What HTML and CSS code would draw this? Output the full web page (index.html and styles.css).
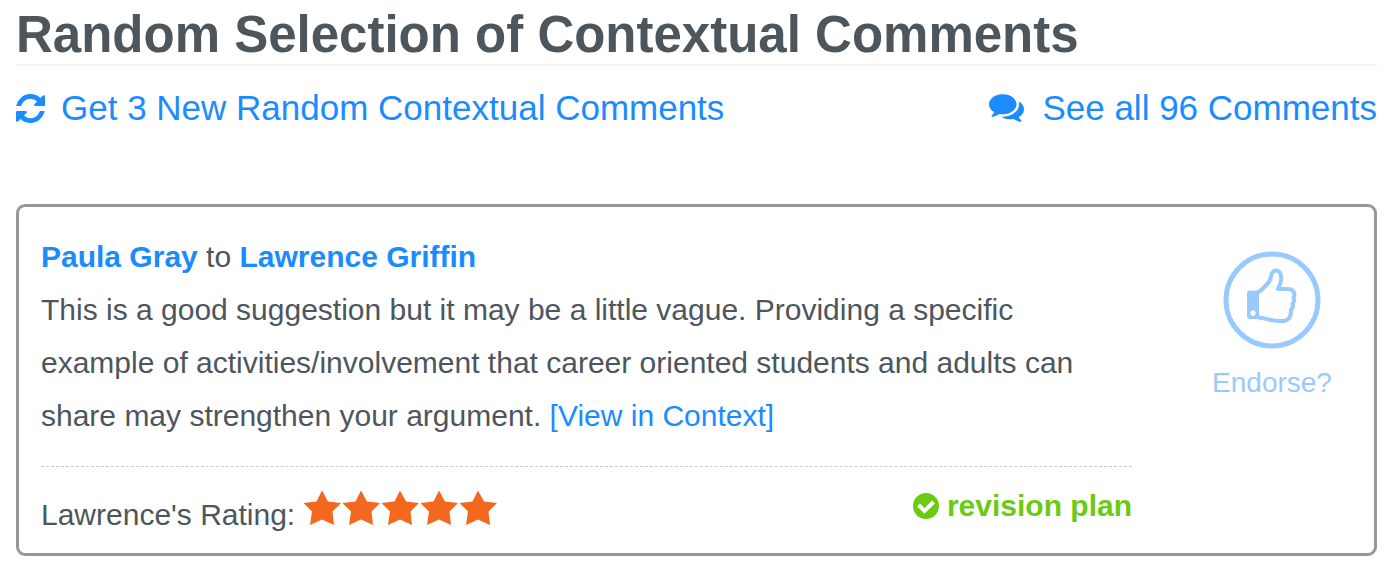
FILE: index.html
```
<!DOCTYPE html>
<html lang="en">
<head>
    <meta charset="UTF-8">
    <meta name="viewport" content="width=device-width, initial-scale=1.0">
    <title>Random Selection of Contextual Comments</title>
    <link rel="stylesheet" href="styles.css">
</head>
<body>
    <h1>Random Selection of Contextual Comments</h1>

    <div class="actions">
        <a href="#refresh">
            <svg class="icon-refresh" viewBox="0 0 1536 1536" aria-hidden="true"><path d="M1511 928q0 5-1 7-64 268-268 434.500t-478 166.500q-146 0-282.500-55t-243.500-157l-129 129q-19 19-45 19t-45-19-19-45v-448q0-26 19-45t45-19h448q26 0 45 19t19 45-19 45l-137 137q71 66 161 102t187 36q134 0 250-65t186-179q11-17 53-117 8-23 30-23h192q13 0 22.500 9.500t9.500 22.500zm25-800v448q0 26-19 45t-45 19h-448q-26 0-45-19t-19-45 19-45l138-138q-148-137-349-137-134 0-250 65t-186 179q-11 17-53 117-8 23-30 23h-199q-13 0-22.500-9.500t-9.500-22.500v-7q65-268 270-434.500t480-166.500q146 0 284 55.500t245 156.500l130-129q19-19 45-19t45 19 19 45z"/></svg>
            Get 3 New Random Contextual Comments
        </a>
        <a href="#all">
            <svg class="icon-comments" viewBox="0 256 1792 1408" aria-hidden="true"><path d="M1408 768q0 139-94 257t-256.500 186.500-353.500 68.500q-86 0-176-16-124 88-278 128-36 9-86 16h-3q-11 0-20.500-8t-11.500-21q-1-3-1-6.500t.5-6.500 2-6l2.500-5 3.500-5.500 4-5 4.500-5 4-4.500q5-6 23-25t26-29.500 22.500-29 25-38.500 20.500-44q-124-72-195-177t-71-224q0-139 94-257t256.500-186.500 353.500-68.500 353.500 68.500 256.500 186.500 94 257zm384 256q0 120-71 224.500t-195 176.500q10 24 20.500 44t25 38.500 22.500 29 26 29.500 23 25q1 1 4 4.500t4.500 5 4 5 3.500 5.500l2.500 5 2 6 .5 6.500-1 6.500q-3 14-13 22t-22 7q-50-7-86-16-154-40-278-128-90 16-176 16-271 0-472-132 58 4 88 4 161 0 309-45t264-129q125-92 192-212t67-254q0-77-23-152 129 71 204 178t75 230z"/></svg>
            See all 96 Comments
        </a>
    </div>

    <div class="comment">
        <div class="comment-main">
            <div class="comment-text">
                <div><a href="#paula" class="person">Paula Gray</a> to <a href="#lawrence" class="person">Lawrence Griffin</a></div>
                <p>This is a good suggestion but it may be a little vague. Providing a specific example of activities/involvement that career oriented students and adults can share may strengthen your argument. <a href="#context">[View in Context]</a></p>
            </div>
            <div class="comment-footer">
                <div class="rating">
                    <span>Lawrence's Rating:</span>
                    <svg class="stars" viewBox="0 0 195 36" role="img" aria-label="5 out of 5">
                        <defs><path id="star" d="M18 0.500L24 11.500 37 13 28.500 21.500 30 35 18 29.500 6 35 8 21.500 -0.500 13 12.500 11.500z"/></defs>
                        <use href="#star" x="1"/>
                        <use href="#star" x="40"/>
                        <use href="#star" x="79"/>
                        <use href="#star" x="118"/>
                        <use href="#star" x="157"/>
                    </svg>
                </div>
                <div class="plan">
                    <svg class="icon-check" viewBox="0 0 26 26" aria-hidden="true"><circle cx="13" cy="13" r="13"/><path d="M5.500 12L11.500 18 20.500 9"/></svg>
                    revision plan
                </div>
            </div>
        </div>
        <button type="button" class="endorse">
            <svg class="icon-thumb" viewBox="0 0 98 98" aria-hidden="true">
                <circle cx="49" cy="49" r="46"/>
                <path class="cuff" fill-rule="evenodd" d="M27 39.500H36V68H27Q24 68 24 65V42.500Q24 39.500 27 39.500zM30 59.500a2.700 2.700 0 1 0 0.010 0z"/>
                <path d="M34 41.500C38 41 41 36 45 32C48 29 47.500 26 49 22C50.500 19 54 18.500 56.500 21C59.500 25 58.500 31 55 38H65C70 38 73 42 70.500 46.500C71.500 48.500 71 51 69.500 52.500C70.500 55 70 57 68 59C68.500 66 65 70 60 70C50 71 44 67 35 66.500"/>
            </svg>
            <span>Endorse?</span>
        </button>
    </div>
</body>
</html>
```
FILE: styles.css
```
body {
    font-family: "Liberation Sans", Arial, sans-serif;
    font-size: 30px;
    margin: 0;
    padding: 6px 23px 18px 16px;
    background-color: white;
    color: #4d565c;
}
h1 {
    font-size: 51px;
    line-height: 58px;
    margin: 0;
    border-bottom: 2px solid #f3f3f4;
}
a {
    color: #1a8cff;
    text-decoration: none;
}
a:hover {
    text-decoration: underline;
}
svg {
    fill: currentColor;
}
.actions {
    display: flex;
    justify-content: space-between;
    margin-top: 22px;
    font-size: 35px;
    line-height: 40px;
}
.actions a {
    display: flex;
    align-items: center;
}
.icon-refresh {
    width: 29px;
    height: 29px;
    margin-right: 16px;
}
.icon-comments {
    width: 35px;
    height: 28px;
    margin-right: 18px;
}
.comment {
    display: flex;
    align-items: flex-start;
    margin-top: 76px;
    padding: 23px 24px 18px 22px;
    border: 3px solid #96999c;
    border-radius: 9px;
}
.comment-main {
    flex: 1;
}
.comment-text {
    padding-bottom: 24px;
    border-bottom: 1px dashed #c8cccf;
    line-height: 53px;
}
.comment-text p {
    max-width: 1050px;
    margin: 0;
}
.person {
    font-weight: bold;
}
.comment-footer {
    display: flex;
    justify-content: space-between;
    align-items: flex-start;
    padding-top: 19px;
    line-height: 40px;
}
.rating {
    display: flex;
    align-items: flex-start;
    gap: 8px;
}
.rating span {
    padding-top: 9px;
}
.stars {
    width: 195px;
    height: 36px;
    margin-top: 4px;
    color: #f4671f;
}
.plan {
    display: flex;
    align-items: center;
    gap: 8px;
    color: #6bcb12;
    font-weight: bold;
}
.icon-check {
    width: 26px;
    height: 26px;
}
.icon-check path {
    fill: none;
    stroke: white;
    stroke-width: 4px;
}
.endorse {
    width: 156px;
    margin: 21px 0 0 62px;
    padding: 0;
    border: none;
    background: none;
    color: #99caff;
    font-family: inherit;
    font-size: 28px;
    line-height: 32px;
    cursor: pointer;
}
.icon-thumb {
    display: block;
    width: 98px;
    height: 98px;
    margin: 0 auto 18px;
    fill: none;
    stroke: currentColor;
    stroke-width: 4px;
    stroke-linejoin: round;
}
.icon-thumb circle {
    stroke-width: 5px;
}
.icon-thumb .cuff {
    fill: currentColor;
    stroke: none;
}
```
